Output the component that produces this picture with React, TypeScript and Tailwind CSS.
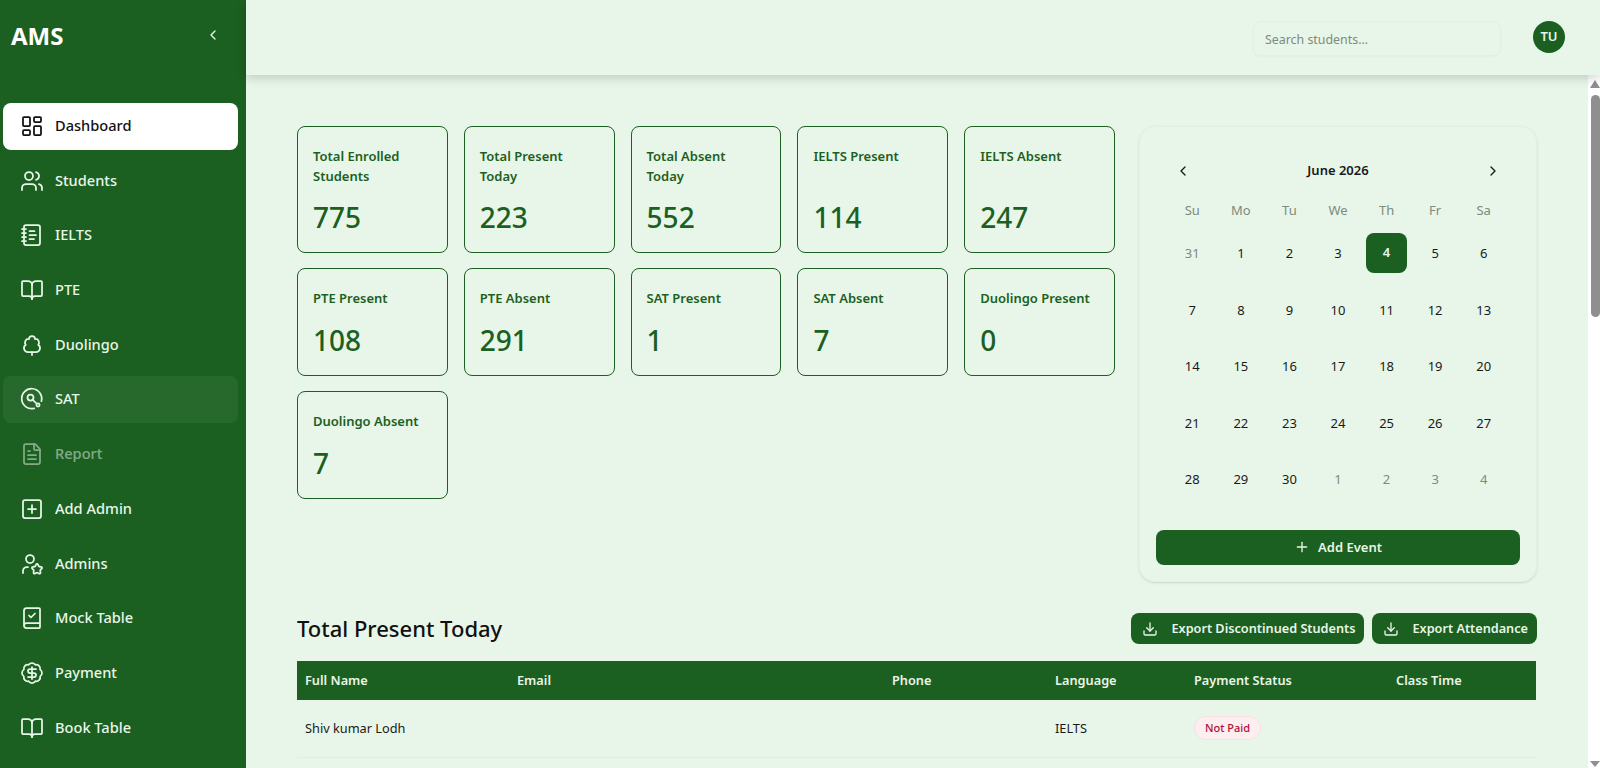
import {
  BadgeDollarSign,
  BookCheck,
  BookOpen,
  ChevronLeft,
  ChevronRight,
  Download,
  FileText,
  LayoutDashboard,
  NotebookText,
  Plus,
  SquarePlus,
  TreeDeciduous,
  UserStar,
  Users,
} from 'lucide-react';

function SatIcon({ className, strokeWidth }: { className?: string; strokeWidth?: number }) {
  return (
    <svg
      viewBox="0 0 24 24"
      fill="none"
      stroke="currentColor"
      strokeWidth={strokeWidth}
      strokeLinecap="round"
      strokeLinejoin="round"
      className={className}
    >
      <path d="M21.4 14.2A10 10 0 1 0 14.2 21.4" />
      <circle cx="10.5" cy="10.5" r="3" />
      <path d="m12.8 12.8 3.7 3.7" />
      <circle cx="18" cy="18" r="1.6" />
    </svg>
  );
}

const NAV = [
  { icon: LayoutDashboard, label: 'Dashboard', state: 'active' },
  { icon: Users, label: 'Students' },
  { icon: NotebookText, label: 'IELTS' },
  { icon: BookOpen, label: 'PTE' },
  { icon: TreeDeciduous, label: 'Duolingo' },
  { icon: SatIcon, label: 'SAT', state: 'hover' },
  { icon: FileText, label: 'Report', state: 'dim' },
  { icon: SquarePlus, label: 'Add Admin' },
  { icon: UserStar, label: 'Admins' },
  { icon: BookCheck, label: 'Mock Table' },
  { icon: BadgeDollarSign, label: 'Payment' },
  { icon: BookOpen, label: 'Book Table' },
];

const STATS = [
  { label: 'Total Enrolled Students', value: 775 },
  { label: 'Total Present Today', value: 223 },
  { label: 'Total Absent Today', value: 552 },
  { label: 'IELTS Present', value: 114 },
  { label: 'IELTS Absent', value: 247 },
  { label: 'PTE Present', value: 108 },
  { label: 'PTE Absent', value: 291 },
  { label: 'SAT Present', value: 1 },
  { label: 'SAT Absent', value: 7 },
  { label: 'Duolingo Present', value: 0 },
  { label: 'Duolingo Absent', value: 7 },
];

const WEEKDAYS = ['Su', 'Mo', 'Tu', 'We', 'Th', 'Fr', 'Sa'];

const DAYS = [
  { n: 31, out: true },
  ...Array.from({ length: 30 }, (_, i) => ({ n: i + 1, out: false })),
  { n: 1, out: true },
  { n: 2, out: true },
  { n: 3, out: true },
  { n: 4, out: true },
];

function Sidebar() {
  return (
    <aside className="flex h-full w-[246px] shrink-0 flex-col overflow-hidden bg-[#1c6021] px-[3px] text-[#e8f6e9]">
      <div className="flex h-[72px] shrink-0 items-center justify-between pl-2 pr-[22px]">
        <span className="text-2xl font-bold text-white">AMS</span>
        <ChevronLeft className="mb-[2px] size-4" />
      </div>
      <nav className="mt-[30.5px] flex w-[235px] flex-col gap-[7.7px]">
        {NAV.map((item) => (
          <div
            key={item.label}
            className={
              item.state === 'active'
                ? 'flex h-[47px] shrink-0 items-center gap-[11px] rounded-lg bg-white pl-[17px] font-medium text-[#111]'
                : item.state === 'hover'
                  ? 'flex h-[47px] shrink-0 items-center gap-[11px] rounded-lg bg-white/5 pl-[17px] font-medium'
                  : item.state === 'dim'
                    ? 'flex h-[47px] shrink-0 items-center gap-[11px] rounded-lg pl-[17px] font-medium opacity-50'
                    : 'flex h-[47px] shrink-0 items-center gap-[11px] rounded-lg pl-[17px] font-medium'
            }
          >
            <item.icon className="size-6 shrink-0" strokeWidth={1.75} />
            <span className="text-[14.6px]">{item.label}</span>
          </div>
        ))}
      </nav>
    </aside>
  );
}

function Header() {
  return (
    <header className="relative z-10 flex h-[75px] shrink-0 items-start justify-end bg-[#e8f6e9] pt-[21px] pr-[35px] shadow-[0_3px_10px_rgba(0,0,0,0.18)]">
      <div className="flex h-[35px] w-[248px] items-center rounded-lg border border-[#e2f0e3] px-[11px] pt-1 text-[12.4px] text-[#7d8a7e] shadow-[0_1px_2px_rgba(0,0,0,0.03)]">
        Search students...
      </div>
      <div className="ml-8 flex size-8 items-center justify-center rounded-full bg-[#1c6021] text-[13px] font-semibold text-[#e8f6e9]">
        TU
      </div>
    </header>
  );
}

function StatCard({ label, value }: { label: string; value: number }) {
  return (
    <div className="flex min-h-[108px] flex-col rounded-lg border border-[#1c6021] px-[15px] pt-[19px] pb-[15px] text-[#1c6021]">
      <div className="text-[13px] leading-5 font-semibold">{label}</div>
      <div className="mt-auto pt-[11px] text-[28px] leading-10 font-medium">{value}</div>
    </div>
  );
}

function Calendar() {
  return (
    <div className="flex h-[456px] w-[398px] shrink-0 flex-col rounded-2xl border border-[#e2f0e3] px-4 shadow-sm">
      <div className="mt-[34px] flex h-5 items-center justify-between px-[19px] text-[#1a1a1a]">
        <ChevronLeft className="size-4" />
        <span className="text-[13px] font-semibold">June 2026</span>
        <ChevronRight className="size-4" />
      </div>
      <div className="mt-5 grid h-5 grid-cols-7 items-center px-3 text-center text-[13px] text-[#7d8a7e]">
        {WEEKDAYS.map((d) => (
          <span key={d}>{d}</span>
        ))}
      </div>
      <div className="mt-[5px] grid grid-cols-7 grid-rows-[repeat(5,56.4px)] items-center justify-items-center px-3 text-[13px] text-[#1a1a1a]">
        {DAYS.map((d, i) => (
          <div
            key={i}
            className={
              !d.out && d.n === 4
                ? 'mb-[3px] flex h-10 w-[41px] items-center justify-center rounded-lg bg-[#1c6021] font-semibold text-[#e8f6e9]'
                : d.out
                  ? 'flex h-10 w-[41px] items-center justify-center text-[#7d8a7e]'
                  : 'flex h-10 w-[41px] items-center justify-center'
            }
          >
            {d.n}
          </div>
        ))}
      </div>
      <button className="mt-[22px] flex h-[35px] items-center justify-center gap-2 rounded-lg bg-[#1c6021] text-[13px] font-semibold text-[#e8f6e9]">
        <Plus className="size-4" />
        Add Event
      </button>
    </div>
  );
}

function ExportButton({ label }: { label: string }) {
  return (
    <button className="flex h-[31px] items-center gap-[13px] rounded-lg bg-[#1c6021] pr-[9px] pl-[11px] text-[12.7px] font-semibold text-[#e8f6e9]">
      <Download className="size-4" />
      {label}
    </button>
  );
}

function Scrollbar() {
  return (
    <div className="flex w-3 shrink-0 flex-col items-end bg-white pt-[5px]">
      <div className="h-0 w-0 border-x-[5px] border-b-[8px] border-x-transparent border-b-[#8f8f8f]" />
      <div className="mt-[7px] h-[222px] w-[9px] rounded-full bg-[#8f8f8f]" />
      <div className="flex-1" />
      <div className="mb-px h-0 w-0 border-x-[5px] border-t-[6px] border-x-transparent border-t-[#8f8f8f]" />
    </div>
  );
}

export default function App() {
  return (
    <div className="flex h-screen overflow-hidden bg-[#e8f6e9] font-['Noto_Sans',sans-serif]">
      <Sidebar />
      <div className="flex min-w-0 flex-1 flex-col">
        <Header />
        <div className="flex min-h-0 flex-1">
          <main className="min-w-0 flex-1 overflow-hidden pt-[51px] pr-[51px] pl-[51px]">
            <div className="flex justify-between">
              <div className="grid w-[818px] shrink-0 grid-cols-5 content-start gap-x-[16px] gap-y-[15px]">
                {STATS.map((s) => (
                  <StatCard key={s.label} label={s.label} value={s.value} />
                ))}
              </div>
              <Calendar />
            </div>
            <div className="mt-[30px] flex items-center justify-between">
              <h2 className="text-[22px] font-medium text-[#111]">Total Present Today</h2>
              <div className="flex gap-2">
                <ExportButton label="Export Discontinued Students" />
                <ExportButton label="Export Attendance" />
              </div>
            </div>
            <table className="mt-[16px] w-[1239px] table-fixed border-collapse text-left text-[12.75px]">
              <colgroup>
                <col className="w-[212px]" />
                <col className="w-[375px]" />
                <col className="w-[163px]" />
                <col className="w-[139px]" />
                <col className="w-[202px]" />
                <col />
              </colgroup>
              <thead>
                <tr className="h-[39px] bg-[#1c6021] text-[#e8f6e9]">
                  {['Full Name', 'Email', 'Phone', 'Language', 'Payment Status', 'Class Time'].map((h) => (
                    <th key={h} className="px-2 font-semibold">
                      {h}
                    </th>
                  ))}
                </tr>
              </thead>
              <tbody>
                <tr className="h-[57px] border-b border-[#dfeee0] text-[#1a1a1a]">
                  <td className="px-2">Shiv kumar Lodh</td>
                  <td className="px-2" />
                  <td className="px-2" />
                  <td className="px-2">IELTS</td>
                  <td className="px-2">
                    <span className="inline-flex h-6 items-center rounded-full border border-[#fbdfe4] bg-[#fdeef0] px-[10px] text-[11px] font-medium text-[#b0123b]">
                      Not Paid
                    </span>
                  </td>
                  <td className="px-2" />
                </tr>
                <tr className="h-[57px]">
                  <td colSpan={6} />
                </tr>
              </tbody>
            </table>
          </main>
          <Scrollbar />
        </div>
      </div>
    </div>
  );
}
